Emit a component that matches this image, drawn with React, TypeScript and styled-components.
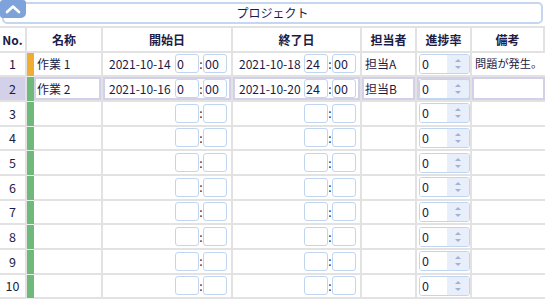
import styled, { createGlobalStyle } from 'styled-components';

const GlobalStyle = createGlobalStyle`
  html, body {
    margin: 0;
    padding: 0;
    background: #fff;
  }
  body {
    font-family: "Noto Sans CJK JP", "Noto Sans", sans-serif;
    color: #1c1c46;
  }
`;

interface Task {
  no: number;
  name?: string;
  start?: string;
  startH?: string;
  startM?: string;
  end?: string;
  endH?: string;
  endM?: string;
  owner?: string;
  note?: string;
  bar: string;
}

const tasks: Task[] = [
  { no: 1, name: '作業 1', start: '2021-10-14', startH: '0', startM: '00', end: '2021-10-18', endH: '24', endM: '00', owner: '担当A', note: '問題が発生。', bar: '#eeae36' },
  { no: 2, name: '作業 2', start: '2021-10-16', startH: '0', startM: '00', end: '2021-10-20', endH: '24', endM: '00', owner: '担当B', bar: '#6fb97b' },
  ...Array.from({ length: 8 }, (_, i) => ({ no: i + 3, bar: '#6fb97b' })),
];

const SELECTED = 2;

function App() {
  return (
    <Page>
      <GlobalStyle />
      <TitleBar>
        <Collapse>
          <svg width="16" height="10" viewBox="0 0 16 10">
            <path d="M2 8 L8 2.5 L14 8" fill="none" stroke="#fff" strokeWidth="2.6" strokeLinecap="round" strokeLinejoin="round" />
          </svg>
        </Collapse>
        <Title>プロジェクト</Title>
      </TitleBar>
      <Grid>
        <HeadCell>No.</HeadCell>
        <HeadCell $span={2}>名称</HeadCell>
        <HeadCell>開始日</HeadCell>
        <HeadCell>終了日</HeadCell>
        <HeadCell>担当者</HeadCell>
        <HeadCell>進捗率</HeadCell>
        <HeadCell>備考</HeadCell>
        {tasks.map((t) => {
          const sel = t.no === SELECTED;
          return (
            <Row key={t.no}>
              <NoCell $selected={sel}>{t.no}</NoCell>
              <BarCell style={{ background: t.bar }} />
              <Cell $selected={sel}>
                <Text>{t.name}</Text>
              </Cell>
              <TimeCell $selected={sel}>
                <DateText>{t.start}</DateText>
                <TimeBox>{t.startH}</TimeBox>
                <Colon>:</Colon>
                <TimeBox>{t.startM}</TimeBox>
              </TimeCell>
              <TimeCell $selected={sel}>
                <DateText>{t.end}</DateText>
                <TimeBox>{t.endH}</TimeBox>
                <Colon>:</Colon>
                <TimeBox>{t.endM}</TimeBox>
              </TimeCell>
              <Cell $selected={sel}>
                <Text>{t.owner}</Text>
              </Cell>
              <SpinCell $selected={sel}>
                <Spinner>
                  <SpinValue>0</SpinValue>
                  <SpinButtons>
                    <svg width="8" height="16" viewBox="0 0 8 16">
                      <path d="M1 6 L4 3 L7 6 Z" fill="#9fb4d3" />
                      <path d="M1 10 L4 13 L7 10 Z" fill="#9fb4d3" />
                    </svg>
                  </SpinButtons>
                </Spinner>
              </SpinCell>
              <NoteCell $selected={sel} $last>
                <Text>{t.note}</Text>
              </NoteCell>
            </Row>
          );
        })}
      </Grid>
    </Page>
  );
}

const Page = styled.div`
  width: 545px;
  height: 300px;
  overflow: hidden;
`;

const TitleBar = styled.div`
  position: relative;
  height: 22px;
  margin: 2px;
  border: 2px solid #c4d6f0;
  border-radius: 5px;
  box-sizing: border-box;
  display: flex;
  align-items: center;
  justify-content: center;
`;

const Collapse = styled.div`
  position: absolute;
  left: -4px;
  top: -4px;
  width: 26px;
  height: 18px;
  background: #7ea2da;
  border-radius: 3px 3px 5px 3px;
  display: flex;
  align-items: center;
  justify-content: center;
`;

const Title = styled.span`
  font-size: 12px;
  line-height: 1;
`;

const Grid = styled.div`
  display: grid;
  grid-template-columns: 27px 7px 69px 130px 129px 55px 55px 73px;
  grid-auto-rows: 24.67px;
  border-top: 2px solid #e2e2e2;
`;

const Row = styled.div`
  display: contents;
`;

const HeadCell = styled.div<{ $span?: number }>`
  grid-column: span ${(p) => p.$span ?? 1};
  display: flex;
  align-items: center;
  justify-content: center;
  font-size: 12px;
  font-weight: 700;
  border-right: 2px solid #e2e2e2;
  border-bottom: 2px solid #e2e2e2;
  &:nth-child(8) {
    border-right: none;
  }
`;

const Cell = styled.div<{ $selected?: boolean; $last?: boolean }>`
  display: flex;
  align-items: center;
  min-width: 0;
  overflow: hidden;
  padding: 0 3px;
  border-right: ${(p) => (p.$last ? 'none' : '2px solid #e2e2e2')};
  border-bottom: 2px solid #e2e2e2;
  box-shadow: ${(p) => (p.$selected ? 'inset 0 0 0 2px #d3d1e9' : 'none')};
  font-size: 12px;
  white-space: nowrap;
`;

const NoteCell = styled(Cell)`
  padding: 0 0 0 3px;
  font-size: 11.2px;
`;

const NoCell = styled.div<{ $selected?: boolean }>`
  display: flex;
  align-items: center;
  justify-content: center;
  font-size: 12.5px;
  background: ${(p) => (p.$selected ? '#d3d1e9' : '#fff')};
  border-right: 2px solid #e2e2e2;
  border-bottom: 2px solid #e2e2e2;
`;

const BarCell = styled.div`
  border-bottom: 1px solid #e8f2ea;
`;

const TimeCell = styled(Cell)`
  padding: 0 4px 0 6px;
  justify-content: flex-end;
`;

const SpinCell = styled(Cell)`
  padding: 0 0 0 2px;
`;

const Text = styled.span`
  line-height: 1;
`;

const DateText = styled.span`
  margin-right: auto;
  font-size: 12px;
  line-height: 1;
`;

const TimeBox = styled.div`
  width: 24px;
  height: 19px;
  box-sizing: border-box;
  border: 1px solid #c0d5ef;
  border-radius: 3px;
  background: #fff;
  font-size: 12.5px;
  line-height: 17px;
  padding-left: 1px;
`;

const Colon = styled.span`
  width: 4px;
  text-align: center;
  font-size: 12px;
  line-height: 1;
`;

const Spinner = styled.div`
  width: 53px;
  height: 20px;
  box-sizing: border-box;
  border: 1px solid #c0d5ef;
  border-radius: 3px;
  display: flex;
  overflow: hidden;
`;

const SpinValue = styled.span`
  flex: 1;
  font-size: 12.5px;
  line-height: 18px;
  padding-left: 2px;
  background: #fff;
`;

const SpinButtons = styled.div`
  width: 22px;
  background: #e8effa;
  display: flex;
  align-items: center;
  justify-content: center;
`;

export default App;
